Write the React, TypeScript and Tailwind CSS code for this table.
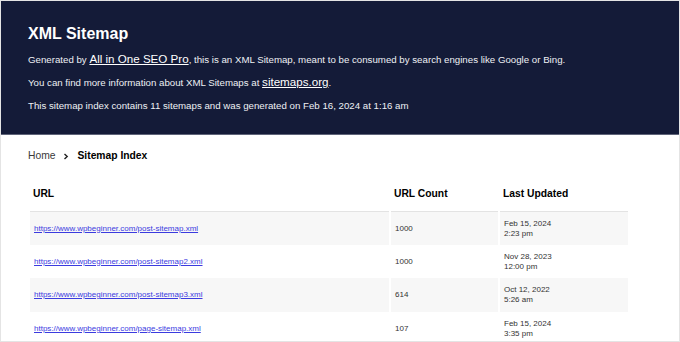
import React from 'react';

interface SitemapRow {
  url: string;
  count: string;
  date: string;
  time: string;
}

const rows: SitemapRow[] = [
  { url: 'https://www.wpbeginner.com/post-sitemap.xml', count: '1000', date: 'Feb 15, 2024', time: '2:23 pm' },
  { url: 'https://www.wpbeginner.com/post-sitemap2.xml', count: '1000', date: 'Nov 28, 2023', time: '12:00 pm' },
  { url: 'https://www.wpbeginner.com/post-sitemap3.xml', count: '614', date: 'Oct 12, 2022', time: '5:26 am' },
  { url: 'https://www.wpbeginner.com/page-sitemap.xml', count: '107', date: 'Feb 15, 2024', time: '3:35 pm' },
];

function Row({ row, index }: { row: SitemapRow; index: number }) {
  const shaded = index % 2 === 0;
  const cell = `flex items-center pl-[4px] ${shaded ? 'bg-[#f7f7f7]' : 'bg-white'} ${
    index === 0 ? 'border-t border-[#e3e3e3]' : ''
  }`;
  return (
    <div className={`flex gap-[2px] ${index === 1 ? 'h-[33px]' : 'h-[34px]'}`}>
      <div className={`${cell} w-[359px]`}>
        <a href="#" className="text-[8px] text-[#3b3bdf] underline leading-[10px]">
          {row.url}
        </a>
      </div>
      <div className={`${cell} w-[107px] text-[8px] text-[#333]`}>{row.count}</div>
      <div className={`${cell} w-[128px] text-[8px] text-[#333] leading-[10px]`}>
        <div>
          <div>{row.date}</div>
          <div>{row.time}</div>
        </div>
      </div>
    </div>
  );
}

export default function App() {
  return (
    <div
      className="w-[680px] h-[342px] overflow-hidden border border-[#e4e4e4] bg-white"
      style={{ fontFamily: '"Liberation Sans", Arial, sans-serif' }}
    >
      <div className="h-[134px] bg-[#141b38] border-b border-[#5f6479] pl-[27px] pt-[22.5px] text-[#eef0f4]">
        <h1 className="text-[16px] font-bold leading-[20px] text-white">XML Sitemap</h1>
        <div className="mt-[5.8px] text-[9.7px] leading-[22.7px]">
          <p>
            Generated by{' '}
            <a href="#" className="text-[11.6px] leading-[10px] underline text-white">
              All in One SEO Pro
            </a>
            , this is an XML Sitemap, meant to be consumed by search engines like Google or Bing.
          </p>
          <p>
            You can find more information about XML Sitemaps at{' '}
            <a href="#" className="text-[11.6px] leading-[10px] underline text-white">
              sitemaps.org
            </a>
            .
          </p>
          <p>This sitemap index contains 11 sitemaps and was generated on Feb 16, 2024 at 1:16 am</p>
        </div>
      </div>

      <div className="pl-[27px] pt-[14px]">
        <div className="flex items-center h-[14px] text-[10.3px]">
          <span className="text-[#3a3a3a]">Home</span>
          <svg width="6" height="7" viewBox="0 0 6 7" className="mx-[8px]">
            <path d="M1.5 1 L4.2 3.5 L1.5 6" fill="none" stroke="#222" strokeWidth="1.4" />
          </svg>
          <span className="font-bold text-black">Sitemap Index</span>
        </div>

        <div className="ml-[2px] mt-[20px]">
          <div className="flex gap-[2px] h-[28px] pt-[5px] text-[10.3px] font-bold leading-[12px] text-black">
            <div className="w-[359px] pl-[3px]">URL</div>
            <div className="w-[107px] pl-[3px]">URL Count</div>
            <div className="w-[128px] pl-[3px]">Last Updated</div>
          </div>
          {rows.map((row, i) => (
            <Row key={row.url} row={row} index={i} />
          ))}
        </div>
      </div>
    </div>
  );
}
